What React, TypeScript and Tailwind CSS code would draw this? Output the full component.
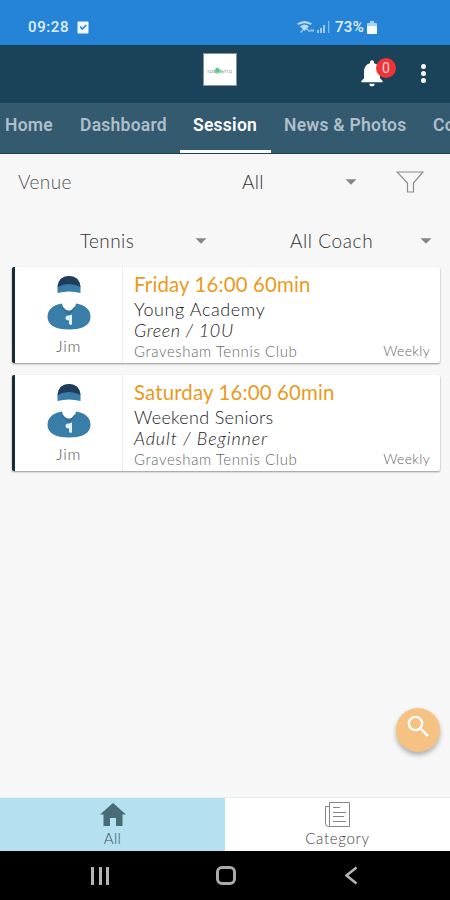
import { clsx } from "clsx";
import { MdNotifications, MdSearch } from "react-icons/md";

type Session = {
  time: string;
  timeClass: string;
  title: string;
  titleClass: string;
  level: string;
  levelClass: string;
  club: string;
  coach: string;
};

const sessions: Session[] = [
  {
    time: "Friday 16:00 60min",
    timeClass: "tracking-[0.15px]",
    title: "Young Academy",
    titleClass: "tracking-[0.6px]",
    level: "Green / 10U",
    levelClass: "tracking-[0.6px]",
    club: "Gravesham Tennis Club",
    coach: "Jim",
  },
  {
    time: "Saturday 16:00 60min",
    timeClass: "tracking-[0.15px]",
    title: "Weekend Seniors",
    titleClass: "tracking-[0.3px]",
    level: "Adult / Beginner",
    levelClass: "tracking-[0.9px]",
    club: "Gravesham Tennis Club",
    coach: "Jim",
  },
];

const tabs = [
  { name: "Home", className: "w-[60px] pl-[5px]" },
  { name: "Dashboard", className: "w-[120px] pl-5" },
  { name: "Session", className: "w-[91px] pl-[13px]", active: true },
  { name: "News & Photos", className: "w-[149px] pl-[13px]" },
  { name: "Co", className: "w-[40px] pl-[13px]" },
];

const Caret = () => (
  <svg width="12" height="6" viewBox="0 0 12 6" className="shrink-0">
    <path d="M0.5 0.3h11L6 5.8z" fill="#868686" />
  </svg>
);

const StatusBar = () => (
  <div className="flex h-[45px] shrink-0 items-center bg-[#2584d8] pl-7 pr-[73px] pt-[10px] font-['Roboto',sans-serif] text-[15px] font-medium text-[#e0f1ff]">
    <span className="w-[49px] tracking-[0.6px]">09:28</span>
    <svg width="12" height="13" viewBox="0 0 12 13">
      <rect x="0.5" y="0.5" width="11" height="12" rx="1" fill="#effaff" />
      <path d="M3 5.5 5.3 8 9.3 4" fill="none" stroke="#2584d8" strokeWidth="1.6" />
    </svg>
    <div className="ml-auto flex items-center">
      <svg width="34" height="15" viewBox="0 0 34 15" className="mr-[4px]">
        <g fill="#b9dafa">
          <path d="M0 3.5Q7.5-1.5 15 3.5L13.5 5Q7.5 1.5 1.5 5zM3 6.3q4.5-3.6 9 0L7.5 11z" />
          <path d="m3 12 3-3 1 1-3 3zM9 9l3 3 1-1-3-3zM13 9.5h4v2h-4z" opacity=".8" />
        </g>
        <g fill="#9cc9f4">
          <path d="M20 10h2v3h-2zM23 8h2v5h-2zM26 5h2v8h-2z" />
          <path d="M31 1h1.3v12H31z" opacity=".8" />
        </g>
      </svg>
      <span className="w-[32px] tracking-[0.3px]">73%</span>
      <svg width="10" height="13" viewBox="0 0 10 13">
        <path d="M3 0h4v2h2q1 0 1 1v9q0 1-1 1H1q-1 0-1-1V3q0-1 1-1h2z" fill="#a9d2f7" />
        <path d="M0 5h10v7q0 1-1 1H1q-1 0-1-1z" fill="#f2faff" />
      </svg>
    </div>
  </div>
);

const Header = () => (
  <header className="flex h-[58px] shrink-0 items-start bg-[#1a4259]">
    <div className="ml-[203px] mt-[8px] flex h-[33px] w-[34px] items-center justify-center border border-[#82959f] bg-white">
      <svg width="28" height="12" viewBox="0 0 28 12">
        <path d="m7 8 4-5 3 3 4 2-4 1-3 1z" fill="#8fdfae" />
        <text x="1" y="9" fontSize="6" textLength="25" fill="#a3b0aa" fontFamily="Lato, sans-serif">
          sportyhq
        </text>
        <circle cx="11.5" cy="6" r="2" fill="#4cc984" />
      </svg>
    </div>
    <div className="relative ml-[119px] mt-[12px] h-[32px] w-[32px]">
      <MdNotifications className="size-[32px] text-white" />
      <span className="absolute left-[20px] top-[1px] flex size-[20px] items-center justify-center rounded-full bg-[#f03336] font-['Roboto',sans-serif] text-[14px] leading-none text-[#ffdcda]">
        0
      </span>
    </div>
    <div className="ml-[33px] mt-[19px] flex w-[6px] flex-col gap-[2px]">
      <i className="size-[5px] rounded-full bg-white" />
      <i className="size-[5px] rounded-full bg-white" />
      <i className="size-[5px] rounded-full bg-white" />
    </div>
  </header>
);

const Tabs = () => (
  <nav className="flex h-[51px] shrink-0 overflow-hidden border-b border-[#1a4259] bg-[#345a70] font-['Roboto',sans-serif] text-[17.5px] font-semibold tracking-[0.25px]">
    {tabs.map((tab) => (
      <div
        key={tab.name}
        className={clsx(
          "shrink-0 whitespace-nowrap border-b-[3px] pt-[9px] leading-[26px]",
          tab.className,
          tab.active ? "border-white text-white" : "border-transparent text-[#aebfc9]"
        )}
      >
        {tab.name}
      </div>
    ))}
  </nav>
);

const Avatar = () => (
  <svg width="44" height="54" viewBox="0 0 44 54">
    <path d="M10.5 17V10Q12 0 22 0t11.500 10v7Q22 14 10.500 17z" fill="#397da9" />
    <path d="M10.5 11Q12 0 22 0t11.500 11Q22 5 10.500 11z" fill="#203c59" />
    <path d="M15 27.500Q.5 30 .5 41c0 8 8 12.500 21.500 12.500S43.500 49 43.500 41q0-11-14.500-13.500-1 7-7 7t-7-7z" fill="#397da9" />
    <path d="m15 31 7 7 6-7" fill="none" stroke="#316c92" strokeWidth="1.2" />
    <path d="M18.500 42q0-3 3.500-2.500l3-1v10q-3 1-3-1v-3q-3.500 0-3.500-2.500z" fill="#e1f1f8" />
  </svg>
);

const SessionCard = ({ session }: { session: Session }) => (
  <article className="flex h-[96px] rounded-[2px] border-l-[3px] border-[#162d39] bg-white shadow-[0_1px_2px_rgba(0,0,0,0.4)]">
    <div className="flex w-[108px] shrink-0 flex-col items-center border-r border-[#ededed] pt-[9px]">
      <Avatar />
      <span className="mt-[6px] text-[16px] font-light leading-[20px] tracking-[0.7px] text-[#555]">
        {session.coach}
      </span>
    </div>
    <div className="flex min-w-0 flex-1 flex-col whitespace-nowrap pl-[11px] pr-[10px]">
      <h2
        className={clsx("mt-[4px] text-[20.4px] font-normal leading-[27px] text-[#eb9a1e]", session.timeClass)}
      >
        {session.time}
      </h2>
      <p className={clsx("text-[18px] font-light leading-[22px] text-[#222]", session.titleClass)}>
        {session.title}
      </p>
      <p className={clsx("text-[18px] font-light italic leading-[21px] text-[#222]", session.levelClass)}>
        {session.level}
      </p>
      <div className="flex justify-between text-[15px] font-light leading-[20px] text-[#666]">
        <span className="tracking-[0.6px]">{session.club}</span>
        <span className="text-[14px] tracking-[0.3px]">Weekly</span>
      </div>
    </div>
  </article>
);

const BottomNav = () => (
  <nav className="flex h-[54px] shrink-0 border-t border-[#e7eeee] bg-white text-[15px] font-light leading-[18px]">
    <div className="flex w-[225px] flex-col items-center bg-[#b5e0ef] pt-[5px] text-[#36505b]">
      <svg width="26" height="24" viewBox="0 0 26 24" className="shrink-0">
        <path d="M13 0 26 11.500h-3.500V23H16v-8h-6v8H3.500V11.500H0z" fill="#496b78" />
      </svg>
      <span className="mt-[2px] tracking-[0.3px]">All</span>
    </div>
    <div className="flex flex-1 flex-col items-center pt-[4px] text-[#444]">
      <svg width="26" height="26" viewBox="0 0 26 26" fill="none" stroke="#858585">
        <path d="M4.500.5h20v24h-20zM4.500 4.500h-4v17q0 3 3 3h2M8 5.500h7M8 10.500h13M8 14.500h11M8 19.500h13" />
      </svg>
      <span className="mt-[1px] tracking-[0.7px]">Category</span>
    </div>
  </nav>
);

const SystemBar = () => (
  <div className="flex h-[49px] shrink-0 items-center bg-black pl-[91px]">
    <svg width="19" height="18" viewBox="0 0 19 18" fill="#b4b4b4">
      <path d="M0 0h3v18H0zM8 0h3v18H8zM15 0h3v18h-3z" />
    </svg>
    <span className="ml-[106px] h-[19px] w-[20px] rounded-[6px] border-[3px] border-[#aaa]" />
    <svg width="13" height="19" viewBox="0 0 13 19" className="ml-[109px]">
      <path d="m11.500 1.500-10 8 10 8" fill="none" stroke="#b4b4b4" strokeWidth="2.5" />
    </svg>
  </div>
);

export default function App() {
  return (
    <div className="flex h-[900px] w-[450px] flex-col overflow-hidden bg-[#f7f7f7] font-['Lato',sans-serif]">
      <StatusBar />
      <Header />
      <Tabs />
      <main className="relative min-h-0 flex-1">
        <div className="flex h-[55px] items-center pl-[18px] text-[19px] font-light text-[#333]">
          <span className="w-[224px] pt-[1px] tracking-[0.4px] text-[#555]">Venue</span>
          <span className="w-[103px] pt-[1px] tracking-[0.3px]">All</span>
          <Caret />
          <svg width="28" height="22" viewBox="0 0 28 22" className="ml-[39px]">
            <path d="M1 1h26l-9.500 11v9h-6v-9z" fill="none" stroke="#8c8c8c" strokeWidth="1.2" />
          </svg>
        </div>
        <div className="flex h-[58px] items-center pl-[80px] pt-[6px] text-[19px] font-light text-[#333]">
          <span className="w-[115px] tracking-[0.4px]">Tennis</span>
          <Caret />
          <span className="ml-[83px] w-[130px] tracking-[0.6px]">All Coach</span>
          <Caret />
        </div>
        <section className="flex flex-col gap-[12px] pl-[12px] pr-[10px]">
          {sessions.map((session) => (
            <SessionCard key={session.time} session={session} />
          ))}
        </section>
        <button className="absolute left-[396px] top-[554px] flex size-[44px] items-center justify-center rounded-full bg-[#f5c284] pb-[8px] shadow-[0_3px_5px_rgba(0,0,0,0.3)]">
          <MdSearch className="size-[29px] text-white" />
        </button>
      </main>
      <BottomNav />
      <SystemBar />
    </div>
  );
}
